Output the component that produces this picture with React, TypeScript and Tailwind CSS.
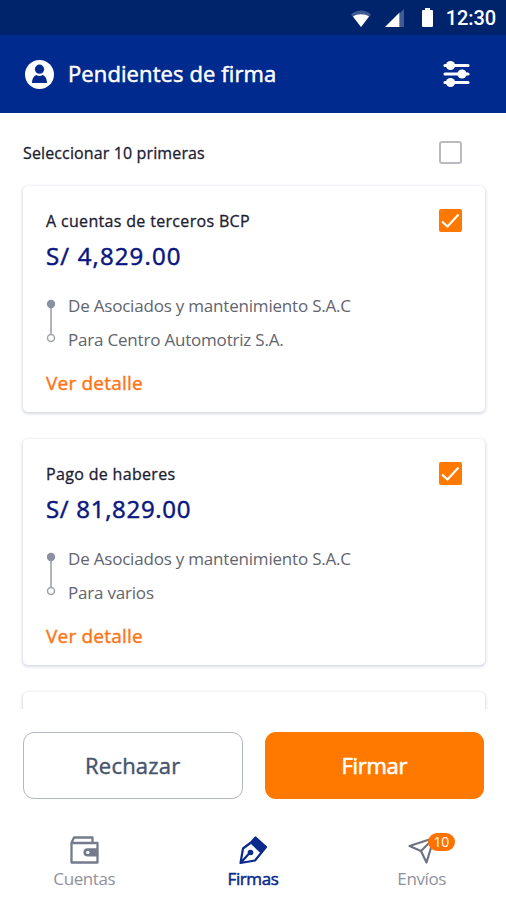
import React from "react";
import { useState } from "react";

type Operation = { title: string; amount: string; spacing: string; from: string; to: string };

const operations: Operation[] = [
  {
    title: "A cuentas de terceros BCP",
    amount: "S/ 4,829.00",
    spacing: "tracking-[1.15px]",
    from: "De Asociados y mantenimiento S.A.C",
    to: "Para Centro Automotriz S.A.",
  },
  {
    title: "Pago de haberes",
    amount: "S/ 81,829.00",
    spacing: "tracking-[0.7px]",
    from: "De Asociados y mantenimiento S.A.C",
    to: "Para varios",
  },
];

const StatusBar: React.FC = () => (
  <div className="flex h-[35px] shrink-0 items-center justify-end bg-[#00246c] pr-[10px] text-white">
    <svg className="mr-[14px] mt-px" width="20" height="17" viewBox="0 0 20 17">
      <path d="M0 4.500C6-.8 14-.8 20 4.500L10 17z" fill="#fff" opacity=".25" />
      <path d="M2 6.500C6 3.600 14 3.600 18 6.500L10 17z" fill="#fff" />
    </svg>
    <svg className="mr-[18px]" width="19" height="18" viewBox="0 0 19 18">
      <path d="M19 0v18h-4V4z" fill="#fff" opacity=".25" />
      <path d="M0 18 14.500 3.500V18z" fill="#fff" />
    </svg>
    <svg className="mr-[13px]" width="11" height="19" viewBox="0 0 11 19">
      <path d="M3 0h5v2h2a1 1 0 0 1 1 1v15a1 1 0 0 1-1 1H1a1 1 0 0 1-1-1V3a1 1 0 0 1 1-1h2z" fill="#fff" />
    </svg>
    <span className="font-['Roboto',sans-serif] text-[20px] font-medium leading-none tracking-[-0.1px]">12:30</span>
  </div>
);

const Header: React.FC = () => (
  <header className="flex h-[78px] shrink-0 items-center bg-[#002a8d] pl-[25px] pr-[36px] text-white">
    <svg className="mr-[14px]" width="29" height="29" viewBox="0 0 29 29">
      <circle cx="14.500" cy="14.500" r="14.500" fill="#fff" />
      <circle cx="14.500" cy="9.200" r="4.600" fill="#002a8d" />
      <path d="M7 23c0-4.500 1.800-7 4.300-8 1.900 1.300 4.500 1.300 6.400 0 2.500 1 4.300 3.500 4.300 8z" fill="#002a8d" />
    </svg>
    <h1 className="-mt-px flex-1 whitespace-nowrap text-[22px] font-medium tracking-[0.1px] [-webkit-text-stroke:0.5px]">
      Pendientes de firma
    </h1>
    <svg width="27" height="28" viewBox="0 0 27 28" fill="#fff" stroke="#fff" strokeWidth="3.200" strokeLinecap="round">
      <path d="M2 5.500h23M2 14h23M2 22.500h23" />
      <g stroke="none">
        <circle cx="7.500" cy="5.500" r="4.600" />
        <circle cx="19" cy="14" r="4.600" />
        <circle cx="7.500" cy="22.500" r="4.600" />
      </g>
    </svg>
  </header>
);

const Checkbox: React.FC<{ checked: boolean; onClick: () => void }> = ({ checked, onClick }) => (
  <button role="checkbox" aria-checked={checked} onClick={onClick} className="block size-[23px] shrink-0">
    {checked ? (
      <svg width="23" height="23" viewBox="0 0 23 23">
        <rect width="23" height="23" rx="2" fill="#ff7800" />
        <path d="m3 12.500 5.500 5L19.500 5.500" fill="none" stroke="#fff" strokeWidth="2.200" />
      </svg>
    ) : (
      <span className="block size-[23px] rounded-[3px] border-2 border-[#b9bbc0]" />
    )}
  </button>
);

const OperationCard: React.FC<{ operation: Operation }> = ({ operation }) => {
  const [checked, setChecked] = useState(true);
  return (
    <article className="flex h-[226px] shrink-0 justify-between rounded-[5px] bg-white px-[23px] pt-[23px] shadow-[0_1px_3px_1px_#d9dce5]">
      <div className="whitespace-nowrap">
        <h2 className="text-[16px] font-medium leading-6 tracking-[0.33px] text-[#1b2033] [-webkit-text-stroke:0.3px]">
          {operation.title}
        </h2>
        <p className={`mt-[7px] text-[24px] font-medium leading-8 text-[#0a1680] [-webkit-text-stroke:0.5px] ${operation.spacing}`}>
          {operation.amount}
        </p>
        <div className="mt-[17px] flex gap-[12px]">
          <svg className="mt-[10px]" width="10" height="46" viewBox="0 0 10 46">
            <path d="M5 5v32" stroke="#a9abb8" strokeWidth="1.800" />
            <circle cx="5" cy="5" r="4.200" fill="#8b90a3" />
            <circle cx="5" cy="39" r="3.500" fill="#fff" stroke="#a0a3ae" strokeWidth="1.500" />
          </svg>
          <div className="text-[17px] leading-[34px] tracking-[-0.2px] text-[#62646e]">
            <p>{operation.from}</p>
            <p>{operation.to}</p>
          </div>
        </div>
        <a className="mt-[14px] block text-[19px] font-medium leading-6 tracking-[0.2px] text-[#ff7414] [-webkit-text-stroke:0.4px]">
          Ver detalle
        </a>
      </div>
      <Checkbox checked={checked} onClick={() => setChecked((prev) => !prev)} />
    </article>
  );
};

const BottomNav: React.FC = () => (
  <nav className="mt-[36px] grid grid-cols-3 text-[17px] leading-6 tracking-[-0.4px] text-[#8f929b]">
    <div className="flex flex-col items-center">
      <svg width="30" height="30" viewBox="0 0 30 30" fill="none" stroke="#747b8f" strokeWidth="2.300">
        <path d="M2.500 8v19.500h26V8h-26L5 2.500h18.500V8" strokeLinejoin="round" />
        <path d="M28 14.500h-9.500a2.900 2.900 0 0 0 0 5.800H28z" fill="#747b8f" />
        <circle cx="18.800" cy="17.400" r="1.700" fill="#fff" stroke="none" />
      </svg>
      <span className="mt-[2px]">Cuentas</span>
    </div>
    <div className="flex flex-col items-center">
      <svg width="30" height="30" viewBox="0 0 30 30" fill="none" stroke="#0a2a8c" strokeWidth="2.200" strokeLinejoin="round">
        <path d="M17.500 2.500 28 12 23.500 17.500 13 7.500z" fill="#0a2a8c" />
        <path d="M13 7.500 5 13.500 2.500 28l14.500-2.500 6.500-8M3 27.500l9-10" />
        <circle cx="12.500" cy="17.500" r="2.800" fill="#0a2a8c" stroke="none" />
      </svg>
      <span className="mt-[2px] font-medium text-[#0a2a8c] [-webkit-text-stroke:0.5px]">Firmas</span>
    </div>
    <div className="flex flex-col items-center">
      <div className="relative">
        <svg width="30" height="30" viewBox="0 0 30 30" fill="none" stroke="#6c7386" strokeWidth="2.200" strokeLinejoin="round">
          <path d="M2.500 11 27 3 19.500 27.500 14 16z" />
          <path d="M14 16 27 3" />
        </svg>
        <span className="absolute -top-[2px] left-[21px] flex h-[18px] w-[27px] items-center justify-center rounded-full bg-[#ff7100] text-[14px] leading-none text-white">
          10
        </span>
      </div>
      <span className="mt-[2px]">Envíos</span>
    </div>
  </nav>
);

export default function App() {
  const [all, setAll] = useState(false);
  return (
    <div className="flex h-[900px] w-[506px] flex-col overflow-hidden bg-white font-['Open_Sans','Noto_Sans',sans-serif]">
      <StatusBar />
      <Header />
      <main className="flex h-[596px] shrink-0 flex-col overflow-hidden pl-[23px] pr-[21px]">
        <div className="flex h-[73px] shrink-0 items-center justify-between pr-[23px] pt-[6px]">
          <span className="text-[16px] font-medium tracking-[0.13px] text-[#1b2033] [-webkit-text-stroke:0.3px]">
            Seleccionar 10 primeras
          </span>
          <Checkbox checked={all} onClick={() => setAll((prev) => !prev)} />
        </div>
        <div className="flex flex-col gap-[27px]">
          {operations.map((operation) => (
            <OperationCard key={operation.title} operation={operation} />
          ))}
          <div className="h-[60px] rounded-[5px] bg-white shadow-[0_1px_3px_1px_#d9dce5]" />
        </div>
      </main>
      <div className="mt-[23px] grid shrink-0 grid-cols-2 gap-[22px] pl-[23px] pr-[22px] text-[22px] font-medium leading-8">
        <button className="h-[67px] rounded-[11px] border-[1.500px] border-[#b3b7be] pb-[2px] tracking-[0.2px] text-[#46536c] [-webkit-text-stroke:0.4px]">
          Rechazar
        </button>
        <button className="h-[67px] rounded-[11px] bg-[#ff7800] pb-[2px] tracking-[-0.3px] text-white [-webkit-text-stroke:0.6px]">
          Firmar
        </button>
      </div>
      <BottomNav />
    </div>
  );
}
